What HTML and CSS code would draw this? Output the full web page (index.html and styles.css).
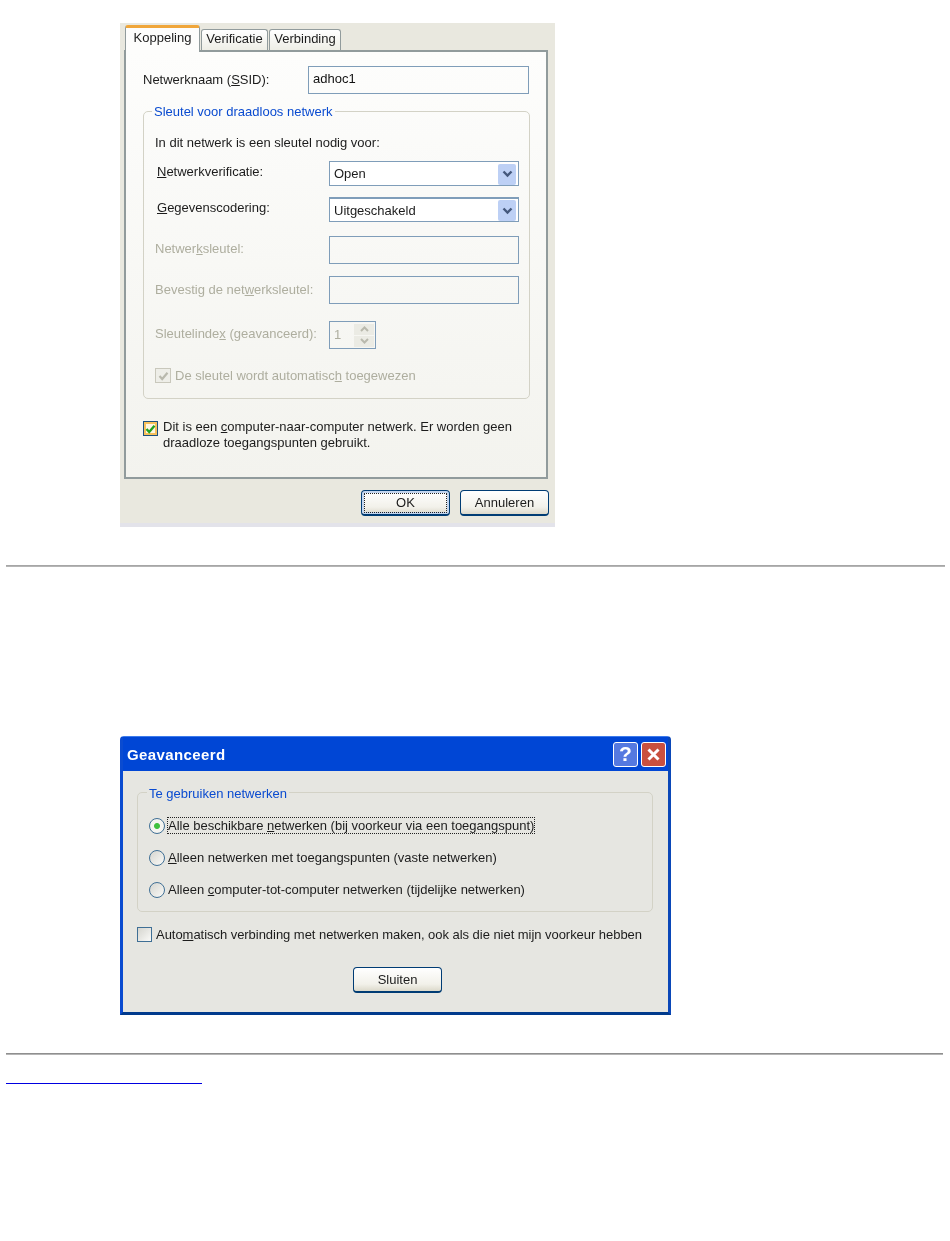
FILE: index.html
```html
<!DOCTYPE html>
<html lang="en">
<head>
    <meta charset="UTF-8">
    <title>Draadloos netwerk</title>
    <link rel="stylesheet" href="styles.css">
</head>
<body>
    <!-- Eigenschappen dialog -->
    <div class="props-dialog">
        <div class="tabs">
            <div class="tab active">Koppeling</div>
            <div class="tab">Verificatie</div>
            <div class="tab">Verbinding</div>
        </div>
        <div class="panel">
            <div class="ssid-row">
                <label class="ssid-label">Netwerknaam (<u>S</u>SID):</label>
                <div class="field ssid-input">adhoc1</div>
            </div>
            <fieldset class="group key-group">
                <legend>Sleutel voor draadloos netwerk</legend>
                <div class="key-note">In dit netwerk is een sleutel nodig voor:</div>
                <div class="key-row row-select">
                    <label class="indent"><u>N</u>etwerkverificatie:</label>
                    <div class="select"><span>Open</span>
                        <span class="drop"><svg width="11" height="8" viewBox="0 0 11 8"><path d="M1.5 1.5 5.5 5.5 9.5 1.5" fill="none" stroke="#44587c" stroke-width="2.4"/></svg></span>
                    </div>
                </div>
                <div class="key-row row-select second">
                    <label class="indent"><u>G</u>egevenscodering:</label>
                    <div class="select focused"><span>Uitgeschakeld</span>
                        <span class="drop"><svg width="11" height="8" viewBox="0 0 11 8"><path d="M1.5 1.5 5.5 5.5 9.5 1.5" fill="none" stroke="#44587c" stroke-width="2.4"/></svg></span>
                    </div>
                </div>
                <div class="key-row row-input disabled">
                    <label>Netwer<u>k</u>sleutel:</label>
                    <div class="field"></div>
                </div>
                <div class="key-row row-input tight disabled">
                    <label>Bevestig de net<u>w</u>erksleutel:</label>
                    <div class="field"></div>
                </div>
                <div class="key-row row-input spaced disabled">
                    <label>Sleutelinde<u>x</u> (geavanceerd):</label>
                    <div class="field spin">
                        <span>1</span>
                        <span class="spin-btns">
                            <span class="spin-btn"><svg width="9" height="6" viewBox="0 0 9 6"><path d="M1 5 4.5 1.5 8 5" fill="none" stroke="#b9b9ad" stroke-width="2"/></svg></span>
                            <span class="spin-btn"><svg width="9" height="6" viewBox="0 0 9 6"><path d="M1 1 4.5 4.5 8 1" fill="none" stroke="#b9b9ad" stroke-width="2"/></svg></span>
                        </span>
                    </div>
                </div>
                <div class="auto-key disabled">
                    <span class="check check-disabled"><svg width="11" height="10" viewBox="0 0 11 10"><path d="M1.5 5 4.2 8 9.5 1.8" fill="none" stroke="#b9b9ad" stroke-width="2.2"/></svg></span>
                    <span>De sleutel wordt automatisc<u>h</u> toegewezen</span>
                </div>
            </fieldset>
            <div class="adhoc-row">
                <span class="check check-on"><svg width="11" height="10" viewBox="0 0 11 10"><path d="M1.5 5 4.2 8 9.5 1.8" fill="none" stroke="#21a121" stroke-width="2.4"/></svg></span>
                <div>
                    <div>Dit is een <u>c</u>omputer-naar-computer netwerk. Er worden geen</div>
                    <div>draadloze toegangspunten gebruikt.</div>
                </div>
            </div>
        </div>
        <div class="footer">
            <button class="xp-btn default">OK</button>
            <button class="xp-btn">Annuleren</button>
        </div>
    </div>

    <hr class="rule first">

    <!-- Geavanceerd dialog -->
    <div class="adv-dialog">
        <div class="titlebar">
            <span class="title">Geavanceerd</span>
            <span class="cap-btn help">?</span>
            <span class="cap-btn close"><svg width="15" height="15" viewBox="0 0 15 15"><path d="M2.5 2.5 12.5 12.5M12.5 2.5 2.5 12.5" stroke="#fff" stroke-width="3"/></svg></span>
        </div>
        <div class="adv-body">
            <fieldset class="group net-group">
                <legend>Te gebruiken netwerken</legend>
                <div class="radio-row">
                    <span class="radio on"></span>
                    <span class="radio-text focus">Alle beschikbare <u>n</u>etwerken (bij voorkeur via een toegangspunt)</span>
                </div>
                <div class="radio-row">
                    <span class="radio"></span>
                    <span class="radio-text"><u>A</u>lleen netwerken met toegangspunten (vaste netwerken)</span>
                </div>
                <div class="radio-row">
                    <span class="radio"></span>
                    <span class="radio-text">Alleen <u>c</u>omputer-tot-computer netwerken (tijdelijke netwerken)</span>
                </div>
            </fieldset>
            <div class="auto-row">
                <span class="check"></span>
                <span>Auto<u>m</u>atisch verbinding met netwerken maken, ook als die niet mijn voorkeur hebben</span>
            </div>
            <div class="adv-footer">
                <button class="xp-btn">Sluiten</button>
            </div>
        </div>
    </div>

    <hr class="rule second">
    <a class="back-link" href="#"></a>
</body>
</html>
```

FILE: styles.css
```css
body {
    margin: 0;
    padding: 23px 0 0;
    background: #fff;
    color: #1c1c1c;
    font-family: "Liberation Sans", Arial, sans-serif;
    font-size: 13px;
    line-height: 16px;
}

u {
    text-underline-offset: 1px;
}

/* shared controls */
.group {
    margin: 0;
    min-width: 0;
    box-sizing: border-box;
    border: 1px solid #d3d2c6;
    border-radius: 5px;
}

.group legend {
    height: 14px;
    line-height: 16px;
    padding: 0 2px;
    color: #0a4bd0;
}

.field {
    box-sizing: border-box;
    border: 1px solid #7f9db9;
    background: transparent;
    padding: 3px 4px;
}

.check {
    box-sizing: border-box;
    flex: none;
    display: flex;
    align-items: center;
    justify-content: center;
    width: 15px;
    height: 15px;
    border: 1px solid #3f6f95;
    background: linear-gradient(135deg, #d5d5cf, #fafaf8);
}

.check-on {
    border-color: #1c5180;
    box-shadow: inset 0 0 0 2px #f7c15c;
    background: #fdf6e3;
}

.check-disabled {
    width: 16px;
    border-color: #c9c8bc;
    background: #eeeee8;
}

.xp-btn {
    box-sizing: border-box;
    width: 89px;
    height: 26px;
    padding: 0;
    border: 1px solid #003c74;
    border-bottom-width: 2px;
    border-radius: 4px;
    background: linear-gradient(#ffffff, #f2f1ea 70%, #dcd9cb);
    color: #1c1c1c;
    font: inherit;
}

.xp-btn.default {
    box-shadow: inset 0 0 0 2px #c4d6ef;
    outline: 1px dotted #222;
    outline-offset: -4px;
}

.disabled {
    color: #aeae9f;
}

/* first dialog */
.props-dialog {
    box-sizing: border-box;
    width: 435px;
    height: 504px;
    margin-left: 120px;
    background: #e9e8df;
    border-bottom: 4px solid #e3e3ea;
    filter: blur(0.35px);
}

.tabs {
    display: flex;
    align-items: flex-end;
    gap: 1px;
    height: 27px;
    padding-left: 5px;
}

.tab {
    box-sizing: border-box;
    height: 21px;
    padding: 1px 0 0;
    text-align: center;
    width: 67px;
    border: 1px solid #919b9c;
    border-bottom: none;
    border-radius: 3px 3px 0 0;
    background: linear-gradient(#ffffff, #eeeee6);
}

.tab:last-child {
    width: 72px;
}

.tab.active {
    position: relative;
    z-index: 1;
    width: 75px;
    height: 27px;
    margin-bottom: -2px;
    padding-top: 2px;
    border-top: 3px solid #f0a63a;
    background: #fdfdfc;
    border-bottom: none;
}

.panel {
    box-sizing: border-box;
    width: 424px;
    height: 429px;
    margin-left: 4px;
    padding: 14px 0 0 17px;
    border: 2px solid #919b9c;
    background: linear-gradient(#fdfdfc, #f3f3ee);
}

.ssid-row {
    display: flex;
    align-items: center;
    height: 28px;
}

.ssid-label {
    width: 165px;
}

.ssid-input {
    width: 221px;
    height: 28px;
    line-height: 18px;
    color: #111;
}

.key-group {
    width: 387px;
    height: 295px;
    margin-top: 10px;
    padding: 17px 0 0 11px;
}

.key-group legend {
    margin-left: -3px;
}

.key-row {
    display: grid;
    grid-template-columns: 174px 190px;
    align-items: center;
}

.key-row label {
    margin-bottom: 3px;
}

.key-row.tight label {
    margin-bottom: 0;
}

.indent {
    padding-left: 2px;
}

.row-select {
    height: 25px;
    margin-top: 10px;
}

.row-select.second {
    margin-top: 11px;
}

.select {
    box-sizing: border-box;
    display: flex;
    align-items: center;
    justify-content: space-between;
    height: 25px;
    padding: 1px 2px 0 4px;
    border: 1px solid #7f9db9;
    background: #fff;
}

.select.focused {
    border-top-width: 2px;
}

.drop {
    display: flex;
    align-items: center;
    justify-content: center;
    width: 18px;
    height: 21px;
    border-radius: 2px;
    background: #bdd0f5;
}

.row-input {
    height: 28px;
    margin-top: 14px;
}

.row-input .field {
    height: 28px;
}

.row-input.tight {
    margin-top: 12px;
}

.row-input.spaced {
    margin-top: 17px;
}

.row-input .spin {
    display: flex;
    align-items: center;
    justify-content: space-between;
    width: 47px;
    padding: 1px 1px 1px 4px;
}

.spin-btns {
    display: flex;
    flex-direction: column;
    gap: 1px;
    width: 20px;
}

.spin-btn {
    display: flex;
    align-items: center;
    justify-content: center;
    height: 11px;
    background: #ebebe4;
}

.auto-key {
    display: flex;
    align-items: center;
    gap: 4px;
    height: 15px;
    margin-top: 19px;
}

.adhoc-row {
    display: flex;
    gap: 5px;
    width: 370px;
    margin-top: 20px;
}

.adhoc-row .check {
    margin-top: 2px;
}

.footer {
    display: flex;
    justify-content: flex-end;
    gap: 10px;
    margin-top: 11px;
    padding-right: 6px;
}

.rule {
    height: 0;
    margin: 0 0 0 6px;
    border: none;
    border-top: 1px solid #8f8f8f;
    border-bottom: 1px solid #b5b5b5;
}

.rule.first {
    margin-top: 38px;
    margin-right: 5px;
    border-top-color: #a6a6a6;
}

.rule.second {
    margin-top: 38px;
    margin-right: 7px;
}

/* second dialog */
.adv-dialog {
    box-sizing: border-box;
    width: 551px;
    height: 279px;
    margin: 169px 0 0 120px;
    border-top: 1px solid #3d7bec;
    border-left: 3px solid #0a4bd0;
    border-right: 3px solid #0a47b8;
    border-bottom: 3px solid #003a8c;
    border-radius: 4px 4px 0 0;
    background: #e6e6e1;
    filter: blur(0.35px);
}

.titlebar {
    display: flex;
    align-items: center;
    gap: 3px;
    height: 34px;
    padding: 0 2px 0 4px;
    background: #0046d5;
}

.title {
    margin: 2px auto 0 0;
    color: #fff;
    font-size: 15px;
    font-weight: bold;
    letter-spacing: 0.4px;
}

.cap-btn {
    box-sizing: border-box;
    display: flex;
    align-items: center;
    justify-content: center;
    width: 25px;
    height: 25px;
    border: 1px solid #fff;
    border-radius: 3px;
    color: #fff;
    font-size: 21px;
    font-weight: bold;
}

.help {
    background: #5579e0;
}

.close {
    background: #c9503f;
}

.adv-body {
    padding: 14px 0 0 14px;
}

.net-group {
    width: 516px;
    height: 127px;
    padding: 18px 0 0 11px;
}

.net-group legend {
    margin-left: -2px;
    line-height: 17px;
}

.radio-row {
    display: flex;
    align-items: center;
    gap: 2px;
    height: 17px;
    margin-bottom: 15px;
}

.radio {
    box-sizing: border-box;
    width: 16px;
    height: 16px;
    border: 1px solid #3f6f95;
    border-radius: 50%;
    background: linear-gradient(135deg, #d5d5cf, #fafaf8);
}

.radio.on {
    background: radial-gradient(circle, #3fc03f 0, #3fc03f 2.5px, #f4f4f0 3.5px);
}

.radio-text {
    border: 1px dotted transparent;
    line-height: 15px;
}

.radio-text.focus {
    border-color: #222;
}

.auto-row {
    display: flex;
    align-items: center;
    gap: 4px;
    height: 15px;
    margin-top: 15px;
    letter-spacing: -0.04px;
}

.adv-footer {
    margin: 25px 0 0 216px;
}

.back-link {
    display: block;
    width: 196px;
    height: 1px;
    margin: 28px 0 0 6px;
    background: #0000e0;
}
```
